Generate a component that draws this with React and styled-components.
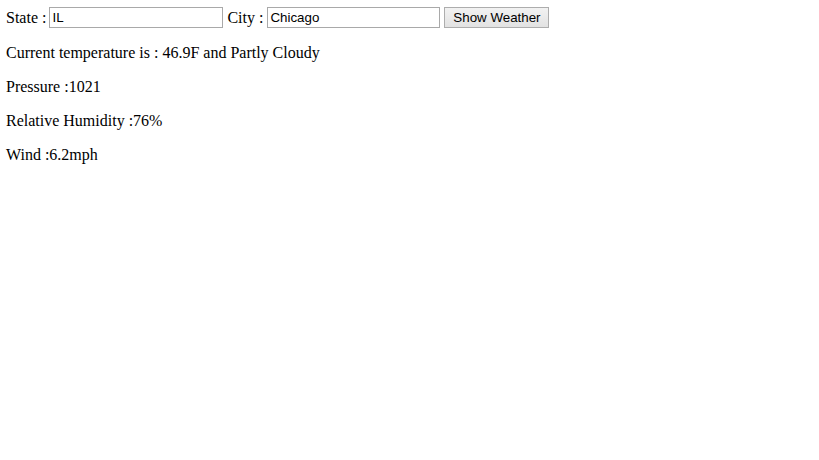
import React from "react";
import styled, { createGlobalStyle } from "styled-components";

const Global = createGlobalStyle`
  html, body { margin: 0; padding: 0; background: #fff; }
  body { font-family: "Liberation Serif", "Times New Roman", serif; font-size: 16px; color: #000; }
`;

const Page = styled.div`
  padding: 7px 6px;
`;

const FormRow = styled.div`
  display: flex;
  align-items: center;
  height: 21px;
  white-space: pre;
`;

const Label = styled.span`
  font-size: 16px;
  margin-right: ${(p) => (p.$tight ? "-1px" : "0")};
`;

const TextInput = styled.input`
  box-sizing: border-box;
  width: ${(p) => p.$w}px;
  height: 21px;
  margin: 0 4px 0 0;
  padding: 1px 2px;
  border: 1px solid #a9a9a9;
  font-family: "Liberation Sans", Arial, sans-serif;
  font-size: 13.33px;
  color: #000;
  outline: none;
`;

const Button = styled.button`
  box-sizing: border-box;
  width: 105px;
  height: 21px;
  margin: 0;
  padding: 1px 6px;
  border: 1px solid #adadad;
  border-radius: 0;
  background: linear-gradient(#f2f2f2, #e2e2e2);
  font-family: "Liberation Sans", Arial, sans-serif;
  font-size: 13.33px;
  color: #000;
`;

const Info = styled.p`
  margin: 16px 0 0;
  line-height: 18px;
`;

export default function App() {
  return (
    <>
      <Global />
      <Page>
        <FormRow>
          <Label $tight>State : </Label>
          <TextInput $w={174} defaultValue="IL" />
          <Label>City : </Label>
          <TextInput $w={173} defaultValue="Chicago" />
          <Button>Show Weather</Button>
        </FormRow>
        <Info>Current temperature is : 46.9F and Partly Cloudy</Info>
        <Info>Pressure :1021</Info>
        <Info>Relative Humidity :76%</Info>
        <Info>Wind :6.2mph</Info>
      </Page>
    </>
  );
}
